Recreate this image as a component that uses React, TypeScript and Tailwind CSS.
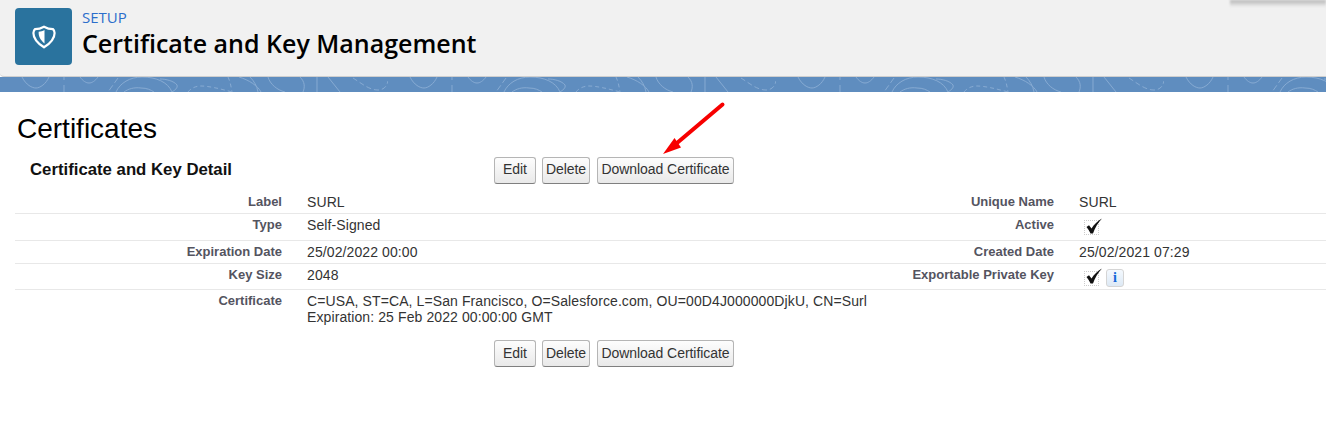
import { ReactNode } from 'react';

const ARIAL = 'font-["Liberation_Sans",Arial,sans-serif]';

function HeaderIcon() {
    return (
        <div className="flex h-[57px] w-[57px] items-center justify-center rounded bg-[#2a739e]">
            <svg width="28" height="28" viewBox="0 0 28 28" fill="none">
                <path d="M14 4.700c2.800 1.600 6 2.400 9 2.400 1 1 1.600 2.400 1.600 3.800 0 5.500-4.500 10.500-10.600 14.400-6.100-3.900-10.600-8.900-10.600-14.400 0-1.400.6-2.800 1.600-3.800 3 0 6.200-.8 9-2.400z" stroke="#fff" strokeWidth="2.200" strokeLinejoin="round" />
                <path d="M14.500 8c-1.800 1-3.800 1.500-5.800 1.700-.5 4.300 1.800 8.300 5.800 11.800z" fill="#fff" />
            </svg>
        </div>
    );
}

// swirl lines in the blue strip behind the header, the tile repeats every 388px
function StripPattern() {
    return (
        <svg className="absolute inset-0 h-full w-full" fill="none">
            <defs>
                <pattern id="strip" width="388" height="15" patternUnits="userSpaceOnUse">
                    <g stroke="#86aad2" strokeWidth="1" fill="none">
                        <path d="M22 0c4 8 10 11 14 11s10-4 13-11" />
                        <path d="M64 0v3M64 8v7" />
                        <path d="M80 0c3 4 6 6 9 6s6-2 9-6" />
                        <path d="M118 1l-10 14" strokeDasharray="6 3" />
                        <path d="M116 15c4-9 14-15 26-15 14 0 26 5 30 15M124 15c4-3 10-5 17-4 6 0 10 2 13 4" />
                        <path d="M160 2c6 0 14 2 17 6 1 3-2 5-5 7" />
                        <path d="M188 15c3-4 8-6 13-6 8 0 20 3 31 6M228 0c2 4 3 9 4 15" strokeDasharray="4 3" />
                        <path d="M239 0c10 3 19 9 22 15M250 0c4 4 7 9 8 15" />
                        <path d="M268 0c2 7 9 13 17 15M300 0c5 5 5 10 3 15" />
                        <path d="M317 0v15M328 0l12 15" />
                        <path d="M353 1c8 5 16 12 25 12 6 0 9-4 10-9" strokeDasharray="5 3" />
                    </g>
                </pattern>
            </defs>
            <rect width="100%" height="100%" fill="url(#strip)" />
        </svg>
    );
}

function ActionButton({ children, className }: { children: ReactNode; className: string }) {
    return (
        <button
            type="button"
            className={`h-[27px] whitespace-nowrap rounded-[3px] border border-[#b5b5b5] border-b-[#7f7f7f] bg-gradient-to-b from-[#fdfdfd] to-[#e9e9e9] pb-[1px] text-[14px] tracking-[-0.05px] text-[#333] ${className}`}
        >
            {children}
        </button>
    );
}

function ButtonGroup() {
    return (
        <div className="flex">
            <ActionButton className="w-[42px]">Edit</ActionButton>
            <ActionButton className="ml-[6px] w-[48px]">Delete</ActionButton>
            <ActionButton className="ml-[7px] w-[137px]">Download Certificate</ActionButton>
        </div>
    );
}

function Check() {
    return (
        <span className="flex h-[15px] w-[15px] items-center justify-center border border-dotted border-[#ccc]">
            <svg width="19" height="17" viewBox="0 0 19 17" className="ml-[3px] -mt-[3px] shrink-0">
                <path d="M2.500 9l2.500-1.800 2.500 3.200C10 6.500 13.500 3 18 .5c-3.800 4.200-7 9-9 15H6.500C5.500 13 4 11 2.500 9z" fill="#111" />
            </svg>
        </span>
    );
}

function InfoBadge() {
    return (
        <span className="flex h-[18px] w-[18px] items-center justify-center rounded-[3px] border border-[#d5d5d5] bg-gradient-to-b from-[#f4f9fe] to-[#dde9f5] font-['Liberation_Serif',serif] text-[14px] font-bold text-[#1468d8]">
            i
        </span>
    );
}

function Label({ children }: { children: ReactNode }) {
    return <div className="pr-[25px] text-right text-[13px] font-bold leading-[15px] text-[#54545f]">{children}</div>;
}

function Value({ children }: { children: ReactNode }) {
    return <div className="text-[14px] leading-[16px] tracking-[0.1px] text-[#333]">{children}</div>;
}

function Row({ left, leftValue, right, rightValue, className }: {
    left: string;
    leftValue: ReactNode;
    right?: string;
    rightValue?: ReactNode;
    className: string;
}) {
    return (
        <div className={`grid grid-cols-[292px_572px_200px_1fr] ${className}`}>
            <Label>{left}</Label>
            <Value>{leftValue}</Value>
            <Label>{right}</Label>
            <Value>{rightValue}</Value>
        </div>
    );
}

export default function App() {
    return (
        <div className={`relative h-[427px] w-[1326px] overflow-hidden bg-white ${ARIAL}`}>
            {/* Page header */}
            <header className="relative z-10 flex h-[77px] items-center gap-[10px] rounded-bl-[4px] border-b border-[#cfcfcf] bg-[#f1f1f1] pb-[4px] pl-[15px]">
                <HeaderIcon />
                <div className="-mt-[4px]">
                    <div className="font-['Open_Sans',sans-serif] text-[15px] leading-[18px] text-[#2c6ecb]">SETUP</div>
                    <h1 className="font-['Open_Sans',sans-serif] text-[25px] font-semibold leading-[34px] text-black">Certificate and Key Management</h1>
                </div>
                {/* shadow from the menu above the fold */}
                <div className="absolute right-0 top-0 h-[7px] w-[96px] bg-gradient-to-b from-[#b5b5b5] to-[#f0f0f0] blur-[1px]" />
            </header>

            <div className="relative h-[15px] bg-[#5f8dbf]">
                <StripPattern />
            </div>

            <main className="pl-[15px]">
                <h2 className="pl-[2px] pt-[20px] text-[28px] leading-[34px] text-black">Certificates</h2>

                <div className="mt-[10px] flex h-[28px] items-center">
                    <h3 className="w-[479px] pl-[15px] text-[16.75px] font-bold text-[#111]">Certificate and Key Detail</h3>
                    <ButtonGroup />
                </div>

                <div className="mt-[6px]">
                    <Row className="h-[24px] border-b border-[#e8e8e8] pt-[4px]" left="Label" leftValue="SURL" right="Unique Name" rightValue="SURL" />
                    <Row className="h-[27px] border-b border-[#e8e8e8] pt-[3px]" left="Type" leftValue="Self-Signed" right="Active" rightValue={<div className="pl-[5px] pt-[3px]"><Check /></div>} />
                    <Row className="h-[23px] border-b border-[#e8e8e8] pt-[3px]" left="Expiration Date" leftValue="25/02/2022 00:00" right="Created Date" rightValue="25/02/2021 07:29" />
                    <Row
                        className="h-[26px] border-b border-[#e8e8e8] pt-[3px]"
                        left="Key Size"
                        leftValue="2048"
                        right="Exportable Private Key"
                        rightValue={<div className="flex items-center gap-[7px] pl-[5px] pt-[2px]"><Check /><InfoBadge /></div>}
                    />
                    <Row
                        className="pt-[3px]"
                        left="Certificate"
                        leftValue={<>C=USA, ST=CA, L=San Francisco, O=Salesforce.com, OU=00D4J000000DjkU, CN=Surl<br />Expiration: 25 Feb 2022 00:00:00 GMT</>}
                    />
                </div>

                <div className="mt-[15px] pl-[479px]">
                    <ButtonGroup />
                </div>
            </main>

            {/* Red annotation arrow */}
            <svg className="absolute left-[655px] top-[98px]" width="76" height="62" viewBox="0 0 76 62" fill="none">
                <path d="M67.500 6.500L22 45" stroke="#f70000" strokeWidth="4" strokeLinecap="round" />
                <path d="M8 56L19.500 40l6.500 9.500z" fill="#f70000" />
            </svg>
        </div>
    );
}
